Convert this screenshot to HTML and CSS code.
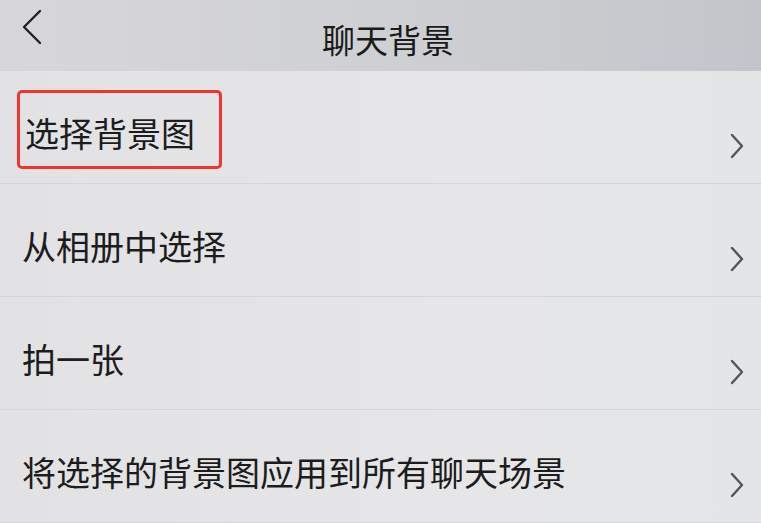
FILE: index.html
```html
<!DOCTYPE html>
<html lang="zh-CN">
<head>
    <meta charset="UTF-8">
    <meta name="viewport" content="width=device-width, initial-scale=1.0">
    <title>聊天背景</title>
    <link rel="stylesheet" href="styles.css">
</head>
<body>
    <div class="screen">
        <div class="topbar">
            <div class="back">
                <svg width="24" height="36" viewBox="0 0 24 36">
                    <path d="M20 2 L4 18 L20 34" fill="none" stroke="#222" stroke-width="2.4" stroke-linecap="round" stroke-linejoin="round"/>
                </svg>
            </div>
            <h1>聊天背景</h1>
            <div></div>
        </div>
        <div class="list">
            <div class="item">
                <span class="label marked">选择背景图</span>
                <svg class="arrow" width="16" height="28" viewBox="0 0 16 28">
                    <path d="M3 3 L13 14 L3 25" fill="none" stroke="#555" stroke-width="2.4" stroke-linecap="round" stroke-linejoin="round"/>
                </svg>
            </div>
            <div class="item">
                <span class="label">从相册中选择</span>
                <svg class="arrow" width="16" height="28" viewBox="0 0 16 28">
                    <path d="M3 3 L13 14 L3 25" fill="none" stroke="#555" stroke-width="2.4" stroke-linecap="round" stroke-linejoin="round"/>
                </svg>
            </div>
            <div class="item">
                <span class="label">拍一张</span>
                <svg class="arrow" width="16" height="28" viewBox="0 0 16 28">
                    <path d="M3 3 L13 14 L3 25" fill="none" stroke="#555" stroke-width="2.4" stroke-linecap="round" stroke-linejoin="round"/>
                </svg>
            </div>
            <div class="item">
                <span class="label">将选择的背景图应用到所有聊天场景</span>
                <svg class="arrow" width="16" height="28" viewBox="0 0 16 28">
                    <path d="M3 3 L13 14 L3 25" fill="none" stroke="#555" stroke-width="2.4" stroke-linecap="round" stroke-linejoin="round"/>
                </svg>
            </div>
        </div>
    </div>
</body>
</html>
```

FILE: styles.css
```css
body {
    margin: 0;
    font-family: "Noto Sans CJK SC", "Noto Sans", sans-serif;
    color: #1c1c1c;
    background: #e4e4e6;
    overflow: hidden;
}
.screen {
    width: 761px;
    height: 523px;
    display: flex;
    flex-direction: column;
    background: linear-gradient(90deg, #e2e2e4 0%, #e6e6e8 60%, #e3e5e7 100%);
}
.topbar {
    height: 80px;
    display: grid;
    grid-template-columns: 120px 1fr 120px;
    align-items: start;
    background: linear-gradient(90deg, #d7d7d9 0%, #cfd0d3 50%, #c2c6ca 100%);
}
.back {
    padding: 9px 0 0 20px;
}
.topbar h1 {
    margin: 0;
    padding-top: 21px;
    padding-left: 15px;
    text-align: center;
    font-size: 33px;
    font-weight: 400;
    line-height: 36px;
    color: #1a1a1a;
}
.list {
    flex: 1;
}
.item {
    height: 112px;
    display: flex;
    align-items: center;
    justify-content: space-between;
    padding: 0 16px 0 22px;
    border-bottom: 1px solid #d5d6d8;
}
.label {
    padding-top: 12px;
    font-size: 34px;
    line-height: 34px;
}
.marked {
    margin: 4px 0 0 -5px;
    padding: 23px 24px 16px 5px;
    border: 3px solid #f3342c;
    border-radius: 5px;
}
.arrow {
    margin-top: 38px;
}
```
